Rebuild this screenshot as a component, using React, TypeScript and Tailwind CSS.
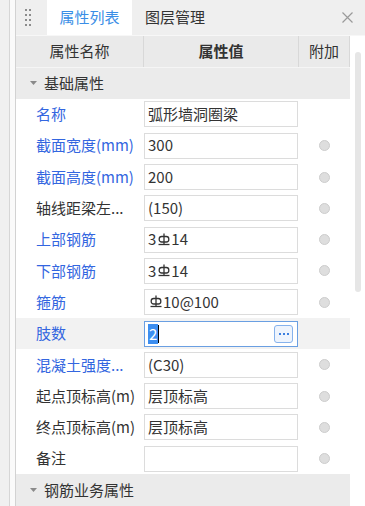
import React from "react";

const FONT = '"Noto Sans CJK SC", "Microsoft YaHei", sans-serif';

function Rebar() {
  return (
    <svg width="14" height="14" viewBox="0 0 14 14" className="inline-block align-[-1px] mr-[1px]">
      <line x1="8" y1="0.5" x2="8" y2="11" stroke="#333" strokeWidth="1.3" />
      <rect x="3.2" y="3.5" width="9.6" height="5.5" rx="2.5" fill="none" stroke="#333" strokeWidth="1.3" />
      <line x1="2.5" y1="11.5" x2="13.5" y2="11.5" stroke="#333" strokeWidth="1.3" />
    </svg>
  );
}

function Dot() {
  return <div className="w-[11px] h-[11px] rounded-full bg-[#dedede] border border-[#cdcdcd]" />;
}

type Row = { label: string; value: React.ReactNode; blue?: boolean; dot?: boolean; selected?: boolean };

const rows: Row[] = [
  { label: "名称", value: "弧形墙洞圈梁", blue: true, dot: false },
  { label: "截面宽度(mm)", value: "300", blue: true, dot: true },
  { label: "截面高度(mm)", value: "200", blue: true, dot: true },
  { label: "轴线距梁左...", value: "(150)", dot: true },
  { label: "上部钢筋", value: <>3<Rebar />14</>, blue: true, dot: true },
  { label: "下部钢筋", value: <>3<Rebar />14</>, blue: true, dot: true },
  { label: "箍筋", value: <><Rebar />10@100</>, blue: true, dot: true },
  { label: "肢数", value: "2", blue: true, selected: true },
  { label: "混凝土强度...", value: "(C30)", blue: true, dot: true },
  { label: "起点顶标高(m)", value: "层顶标高", dot: true },
  { label: "终点顶标高(m)", value: "层顶标高", dot: true },
  { label: "备注", value: "", dot: true },
];

function Group({ title }: { title: string }) {
  return (
    <div className="h-[31.3px] bg-[#ebebeb] flex items-center w-[334px]">
      <svg width="7" height="4" viewBox="0 0 7 4" className="ml-[14px] mr-[7px]">
        <path d="M0 0 L7 0 L3.5 4 Z" fill="#8a8a8a" />
      </svg>
      <span className="text-[15px] text-[#333]">{title}</span>
    </div>
  );
}

export default function App() {
  return (
    <div className="flex w-[365px] h-[506px] overflow-hidden bg-white" style={{ fontFamily: FONT }}>
      <div className="w-[9px] bg-[#f0f0f0]" />
      <div className="w-[1px] bg-[#d6d6d6]" />
      <div className="w-[5px] bg-[#fafafa]" />
      <div className="w-[1px] bg-[#d2d2d2]" />
      <div className="flex-1 flex flex-col">
        {/* tab bar */}
        <div className="h-[35px] bg-[#efefef] flex items-stretch">
          <div className="w-[31px] grid grid-cols-2 gap-x-[3px] gap-y-[3px] content-center pl-[9px] pr-[17px]">
            {Array.from({ length: 8 }).map((_, i) => (
              <div key={i} className="w-[2px] h-[2px] bg-[#8c8c8c]" />
            ))}
          </div>
          <div className="w-[85px] bg-white flex items-center justify-center text-[15px] text-[#3a8ee6]">属性列表</div>
          <div className="flex items-center pl-[13px] text-[15px] text-[#333]">图层管理</div>
          <div className="flex-1" />
          <div className="flex items-center pr-[12px]">
            <svg width="11" height="11" viewBox="0 0 11 11">
              <path d="M0.5 0.5 L10.5 10.5 M10.5 0.5 L0.5 10.5" stroke="#9a9a9a" strokeWidth="1.2" />
            </svg>
          </div>
        </div>
        <div className="flex flex-1 border-t border-[#f7f7f7]">
          <div className="flex flex-col w-[334px]">
            {/* header */}
            <div className="h-[31.5px] flex bg-[#eaeaea] border-b border-[#f5f5f5] text-[15px] text-[#333]">
              <div className="w-[128px] border-r border-[#d8d8d8] flex items-center justify-center">属性名称</div>
              <div className="w-[155px] border-r border-[#d8d8d8] flex items-center justify-center font-bold">属性值</div>
              <div className="w-[51px] border-r border-[#d8d8d8] flex items-center justify-center">附加</div>
            </div>
            <Group title="基础属性" />
            {rows.map((r, i) => (
              <div key={i} className={`h-[31.3px] flex items-center ${r.selected ? "bg-[#f2f2f2]" : "bg-white"}`}>
                <div className={`w-[128px] pl-[20px] text-[15px] whitespace-nowrap ${r.blue ? "text-[#3366e0]" : "text-[#333]"}`}>{r.label}</div>
                <div className="w-[155px]">
                  {r.selected ? (
                    <div className="w-[154px] h-[26px] border border-[#6a9fe2] bg-white flex items-center pl-[3px] pr-[4px] text-[15px]">
                      <span className="bg-[#3d8ef0] text-white leading-[20px] px-[1px]">2</span>
                      <span className="w-[1px] h-[18px] bg-black" />
                      <div className="flex-1" />
                      <div className="w-[19px] h-[18px] border border-[#86b2ec] rounded-[3px] bg-[#eef4fd] flex items-center justify-center gap-[2px]">
                        <span className="w-[2px] h-[2px] bg-[#3b7fe0]" />
                        <span className="w-[2px] h-[2px] bg-[#3b7fe0]" />
                        <span className="w-[2px] h-[2px] bg-[#3b7fe0]" />
                      </div>
                    </div>
                  ) : (
                    <div className="w-[154px] h-[26px] border border-[#dcdcdc] bg-white flex items-center pl-[3px] text-[15px] text-[#333] whitespace-nowrap">
                      {r.value}
                    </div>
                  )}
                </div>
                <div className="w-[51px] flex items-center justify-center">{r.dot ? <Dot /> : null}</div>
              </div>
            ))}
            <Group title="钢筋业务属性" />
          </div>
          <div className="flex-1 pl-[5px] pt-[16px]">
            <div className="w-[6px] h-[240px] rounded-full bg-[#e6e6e6]" />
          </div>
        </div>
      </div>
    </div>
  );
}
